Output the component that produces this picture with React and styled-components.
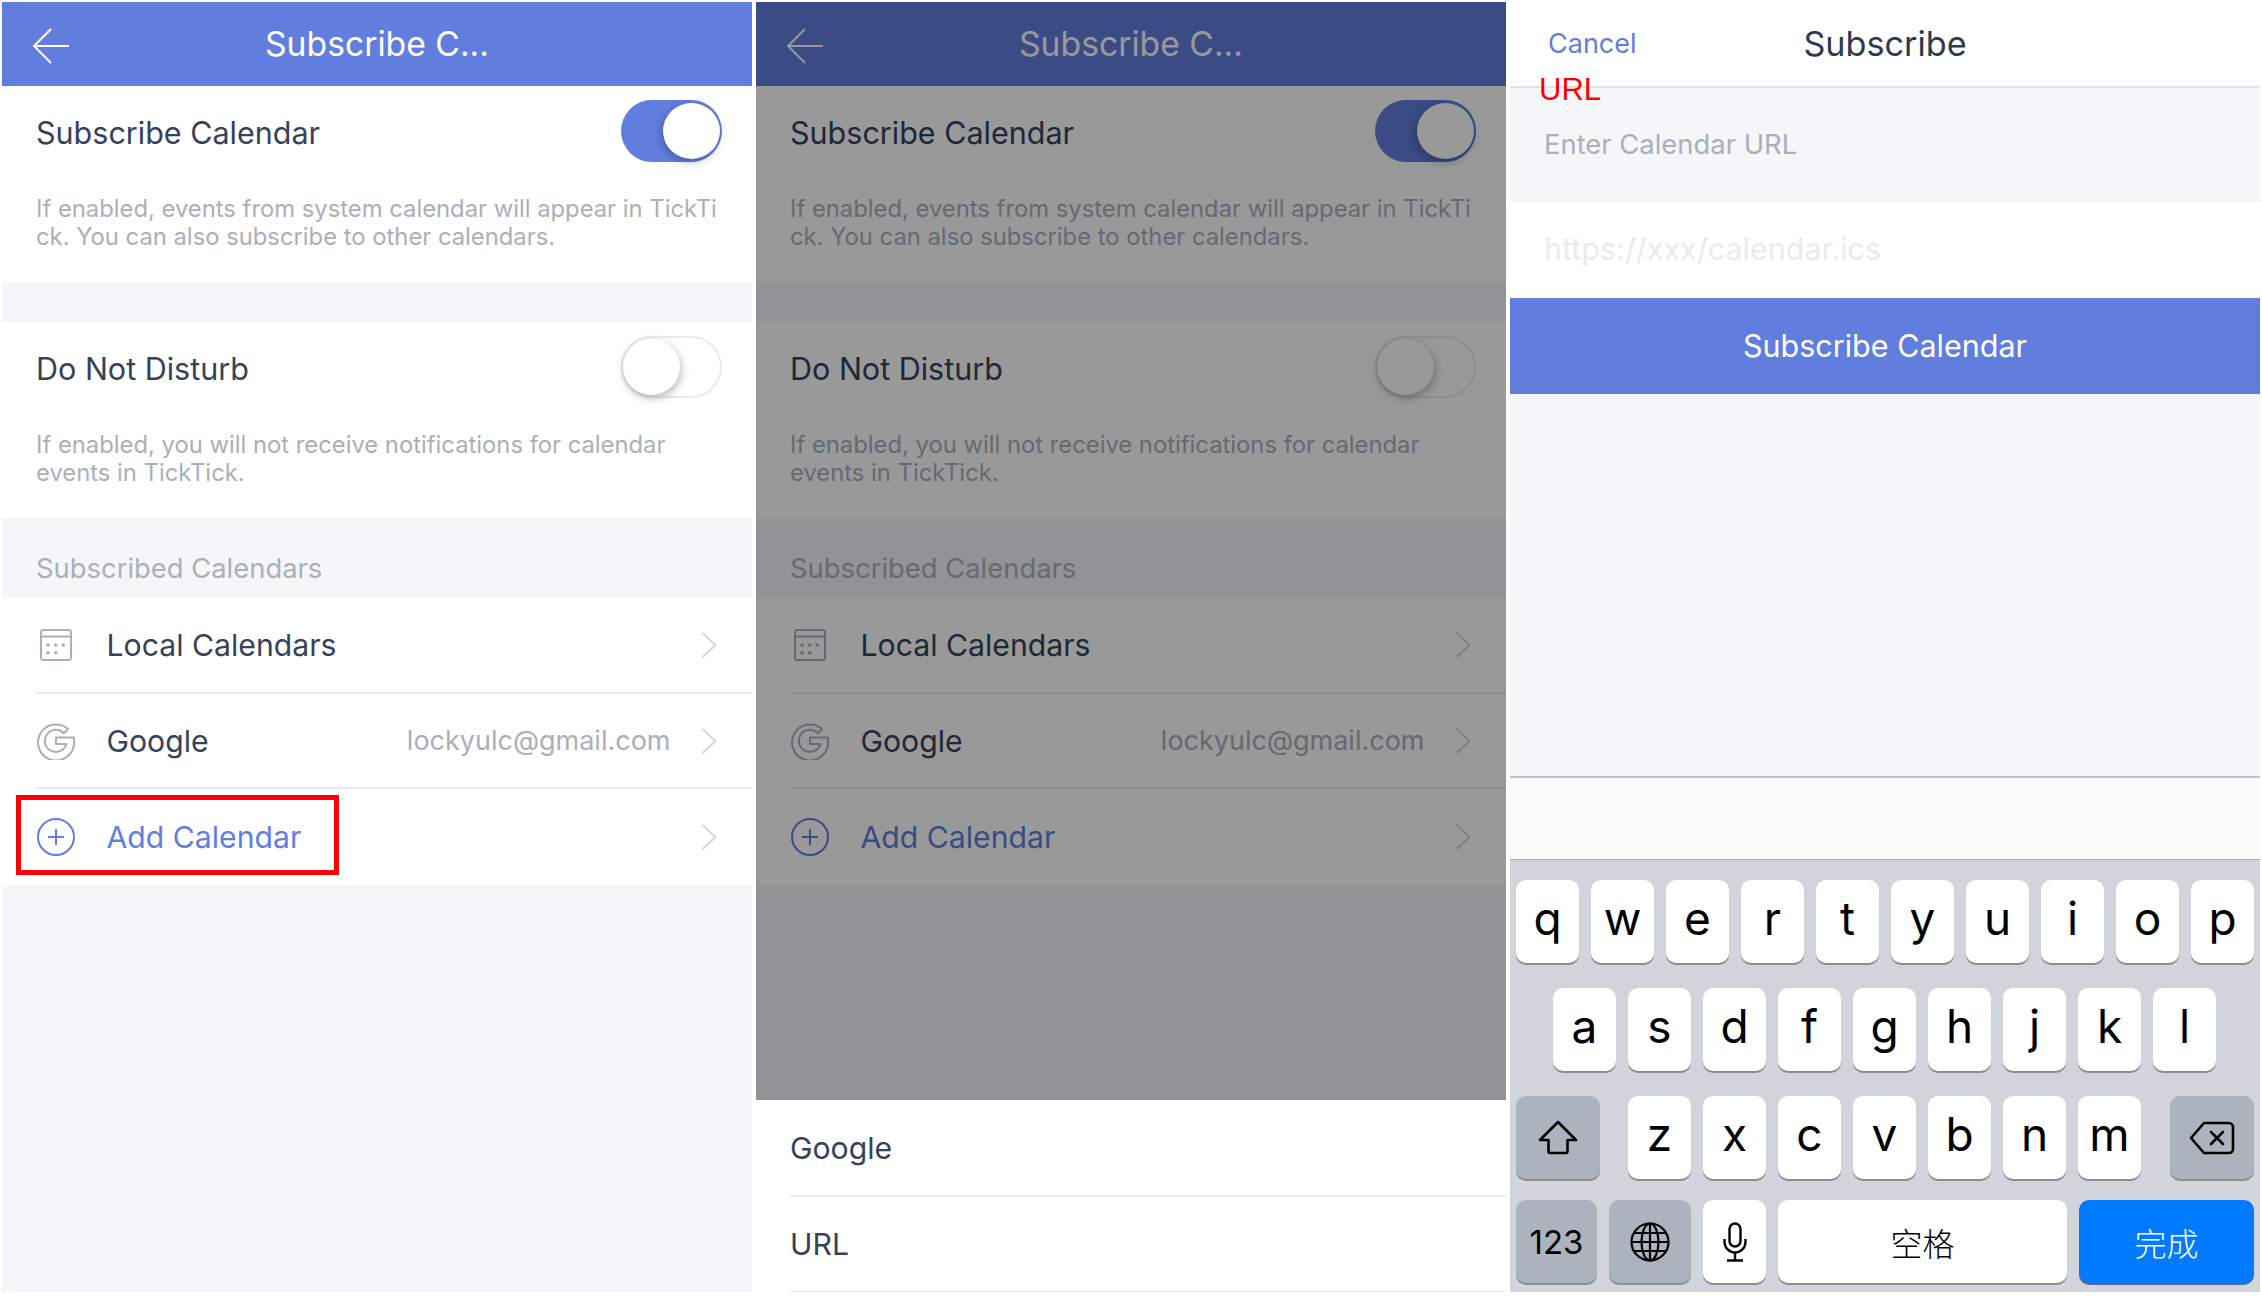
import React from "react";
import styled, { createGlobalStyle } from "styled-components";

const BLUE = "#617ede";
const INK = "#36425a";
const MUTED = "#a9b0bc";
const PAGE = "#f4f6f8";
const LINE = "#e9ebee";

const Global = createGlobalStyle`
  html, body { margin: 0; padding: 0; background: #fff; }
  body { font-family: Inter, "Noto Sans CJK SC", sans-serif; width: 2262px; height: 1296px; overflow: hidden; }
`;
const Page = styled.div`
  display: grid;
  grid-template-columns: 750px 750px 750px;
  column-gap: 4px;
  padding: 2px 0 0 2px;
  height: 1290px;
`;
const Panel = styled.section`
  position: relative;
  display: flex;
  flex-direction: column;
  height: 1290px;
  background: ${PAGE};
  overflow: hidden;
`;
const Header = styled.header`
  position: relative;
  display: flex;
  align-items: center;
  justify-content: center;
  height: 84px;
  box-sizing: border-box;
  padding-bottom: 2px;
  background: ${BLUE};
  color: #fff;
  font-size: 33.7px;
  flex: none;
`;
const BackIcon = styled.svg`
  position: absolute;
  left: 30px;
  top: 26px;
`;
const Card = styled.div`
  background: #fff;
  height: ${(p) => p.$h}px;
  padding: 0 30px 0 34px;
  margin-bottom: ${(p) => p.$mb || 0}px;
  flex: none;
`;
const CardHead = styled.div`
  display: flex;
  align-items: center;
  justify-content: space-between;
  height: 92px;
  font-size: 30.5px;
  color: ${INK};
`;
const Note = styled.p`
  margin: 17px 0 0;
  font-size: 23.8px;
  line-height: 28px;
  color: ${MUTED};
  white-space: nowrap;
`;
const Track = styled.div`
  position: relative;
  width: 101px;
  height: 62px;
  box-sizing: border-box;
  border-radius: 31px;
  margin-top: -2px;
  background: ${(p) => (p.$on ? BLUE : "#fff")};
  border: ${(p) => (p.$on ? "none" : "2px solid #e9ebef")};
`;
const Knob = styled.div`
  position: absolute;
  top: ${(p) => (p.$on ? 3 : 1)}px;
  ${(p) => (p.$on ? "right: 2px;" : "left: 0;")}
  width: 57px;
  height: 56px;
  border-radius: 50%;
  background: #fff;
  box-shadow: ${(p) => (p.$on ? "-2px 3px 8px rgba(30,40,80,.35)" : "1px 3px 9px rgba(60,70,90,.4)")};
`;
const Caption = styled.div`
  height: 80px;
  padding: 0 0 13px 34px;
  box-sizing: border-box;
  display: flex;
  align-items: flex-end;
  font-size: 27.4px;
  line-height: 34px;
  color: ${MUTED};
  flex: none;
`;
const List = styled.div`
  background: #fff;
  flex: none;
  padding-left: 34px;
`;
const Row = styled.div`
  position: relative;
  display: flex;
  align-items: center;
  height: ${(p) => p.$h || 95.7}px;
  box-sizing: border-box;
  padding-right: 35.5px;
  border-bottom: ${(p) => (p.$last ? "none" : `2px solid ${LINE}`)};
  font-size: 30.2px;
  color: ${(p) => (p.$accent ? BLUE : INK)};
`;
const IconSlot = styled.span`
  display: flex;
  width: 40px;
  justify-content: center;
  margin-right: 30.5px;
`;
const RowValue = styled.span`
  margin-left: auto;
  margin-right: 30px;
  font-size: 27px;
  color: ${MUTED};
`;
const Chevron = styled.svg`
  margin-left: ${(p) => (p.$auto ? "auto" : "0")};
`;
const Marker = styled.div`
  position: absolute;
  left: -20px;
  top: 6px;
  width: 323px;
  height: 80px;
  box-sizing: border-box;
  border: 5px solid #fb0007;
`;
const Scrim = styled.div`
  position: absolute;
  left: 0;
  right: 0;
  top: 0;
  height: 1098px;
  background: rgba(0, 0, 0, 0.4);
`;
const Sheet = styled.div`
  position: absolute;
  left: 0;
  right: 0;
  top: 1098px;
  bottom: 0;
  padding-left: 34px;
  background: #fff;
`;
const TopBar = styled.div`
  position: relative;
  height: 84px;
  box-sizing: content-box;
  background: #fff;
  border-bottom: 2px solid #e1e3e7;
  display: flex;
  align-items: center;
  justify-content: center;
  color: #2f394d;
  font-size: 34.2px;
  flex: none;
`;
const TitleText = styled.span`
  margin-bottom: 2px;
`;
const Cancel = styled.span`
  position: absolute;
  left: 38px;
  top: 25px;
  font-size: 27px;
  color: ${BLUE};
`;
const Stamp = styled.span`
  position: absolute;
  left: 29px;
  top: 69px;
  font-family: "Liberation Sans", sans-serif;
  font-size: 31px;
  line-height: 38px;
  color: #fb0007;
`;
const FormLabel = styled.div`
  height: 114px;
  box-sizing: border-box;
  padding: 37px 0 0 34px;
  font-size: 27.4px;
  line-height: 38px;
  color: ${MUTED};
  flex: none;
`;
const UrlField = styled.div`
  height: 96px;
  box-sizing: border-box;
  display: flex;
  align-items: center;
  padding: 0 0 3px 34px;
  font-size: 30.5px;
  background: #fff;
  color: #e9ebee;
  flex: none;
`;
const Submit = styled.div`
  height: 96px;
  box-sizing: border-box;
  padding-bottom: 2px;
  display: flex;
  align-items: center;
  justify-content: center;
  background: ${BLUE};
  color: #fff;
  font-size: 30.5px;
  flex: none;
`;
const Filler = styled.div`
  flex: 1;
  background: ${PAGE};
  border-bottom: 2px solid #bdc1cc;
`;
const Gap = styled.div`
  height: 81px;
  background: #fbfbfc;
  flex: none;
`;
const Keyboard = styled.div`
  height: 433px;
  box-sizing: border-box;
  background: #d1d5db;
  border-top: 1px solid #a9adb5;
  padding: 20px 6px 0;
  flex: none;
`;
const KeyRow = styled.div`
  display: flex;
  height: 84px;
  margin-top: ${(p) => p.$mt || 0}px;
  padding-left: ${(p) => p.$pl || 0}px;
`;
const Key = styled.div`
  display: flex;
  align-items: center;
  justify-content: center;
  flex: none;
  width: ${(p) => p.$w || 63}px;
  margin-left: ${(p) => p.$ml || 0}px;
  margin-right: ${(p) => p.$mr ?? 12}px;
  height: 83px;
  border-radius: 10px;
  background: ${(p) => (p.$tone === "dark" ? "#acb3be" : p.$tone === "go" ? "#007aff" : "#fff")};
  box-shadow: 0 2px 0 ${(p) => (p.$tone === "go" ? "#5d6b80" : "#8a8c91")};
  color: ${(p) => (p.$tone === "go" ? "#fff" : "#000")};
  font-family: ${(p) => (p.$cjk ? '"Noto Sans CJK SC", sans-serif' : 'Inter, "Liberation Sans", sans-serif')};
  font-size: ${(p) => p.$size || 46}px;
  font-weight: ${(p) => (p.$cjk ? 300 : 400)};
  padding-bottom: ${(p) => p.$pb || 0}px;
  box-sizing: border-box;
`;

const ChevronIcon = (props) => (
  <Chevron {...props} width="16" height="26" viewBox="0 0 16 26" fill="none" stroke="#d3d7dc" strokeWidth="2">
    <path d="M1.5 1l13 12-13 12" />
  </Chevron>
);
const CalendarIcon = () => (
  <svg width="32" height="32" viewBox="0 0 32 32" fill="none" stroke={MUTED} strokeWidth="2">
    <rect x="1" y="1" width="30" height="30" rx="2.5" />
    <path d="M1 7.5h30" />
    <g fill={MUTED} stroke="none">
      <circle cx="8" cy="16" r="1.8" /><circle cx="15.7" cy="16" r="1.8" /><circle cx="23.3" cy="16" r="1.8" />
      <circle cx="8" cy="23.7" r="1.8" /><circle cx="15.7" cy="23.7" r="1.8" />
    </g>
  </svg>
);
const GoogleIcon = () => (
  <svg width="38" height="38" viewBox="0 0 38 38" fill="none" stroke={MUTED} strokeWidth="2" strokeLinejoin="round">
    <path d="M31 7A18 18 0 1 0 37 19L37 15.5L19 15.5L19 22L29.4 22A11 11 0 1 1 26.8 11.2Z" />
  </svg>
);
const PlusIcon = () => (
  <svg width="38" height="38" viewBox="0 0 38 38" fill="none" stroke={BLUE} strokeWidth="2">
    <circle cx="19" cy="19" r="18" />
    <path d="M19 11v16M11 19h16" />
  </svg>
);

const MarkCtx = React.createContext(false);
function AnnotationSlot() {
  return React.useContext(MarkCtx) ? <Marker /> : null;
}

const Settings = () => (
  <>
    <Header>
      Subscribe C...
      <BackIcon width="38" height="36" viewBox="0 0 38 36" fill="none" stroke="#fff" strokeWidth="2">
        <path d="M19 1L2 18l17 17M2 18h35" />
      </BackIcon>
    </Header>
    <Card $h={196} $mb={40}>
      <CardHead>
        Subscribe Calendar
        <Track $on><Knob $on /></Track>
      </CardHead>
      <Note>
        If enabled, events from system calendar will appear in TickTi<br />
        ck. You can also subscribe to other calendars.
      </Note>
    </Card>
    <Card $h={196}>
      <CardHead>
        Do Not Disturb
        <Track><Knob /></Track>
      </CardHead>
      <Note>
        If enabled, you will not receive notifications for calendar<br />
        events in TickTick.
      </Note>
    </Card>
    <Caption>Subscribed Calendars</Caption>
    <List>
      <Row>
        <IconSlot><CalendarIcon /></IconSlot>
        Local Calendars
        <ChevronIcon $auto />
      </Row>
      <Row>
        <IconSlot><GoogleIcon /></IconSlot>
        Google
        <RowValue>lockyulc@gmail.com</RowValue>
        <ChevronIcon />
      </Row>
      <Row $last $accent>
        <IconSlot><PlusIcon /></IconSlot>
        Add Calendar
        <ChevronIcon $auto />
        <AnnotationSlot />
      </Row>
    </List>
  </>
);

const ShiftIcon = () => (
  <svg width="40" height="35" viewBox="0 0 40 35" fill="none" stroke="#000" strokeWidth="2.6" strokeLinejoin="round">
    <path d="M20 2L38 20H29.5V31.5a1.5 1.5 0 0 1-1.5 1.5H12a1.5 1.5 0 0 1-1.5-1.5V20H2Z" />
  </svg>
);
const DeleteIcon = () => (
  <svg width="46" height="34" viewBox="0 0 46 34" fill="none" stroke="#000" strokeWidth="2.6" strokeLinejoin="round">
    <path d="M15 2H40a4 4 0 0 1 4 4V28a4 4 0 0 1-4 4H15L2 17Z" />
    <path d="M22 11l12 12M34 11l-12 12" strokeLinecap="round" />
  </svg>
);
const GlobeIcon = () => (
  <svg width="40" height="40" viewBox="0 0 40 40" fill="none" stroke="#000" strokeWidth="2.2">
    <circle cx="20" cy="20" r="18.5" />
    <ellipse cx="20" cy="20" rx="8.5" ry="18.5" />
    <path d="M20 1.5v37M1.5 20h37M4 11h32M4 29h32" />
  </svg>
);
const MicIcon = () => (
  <svg width="24" height="40" viewBox="0 0 24 40" fill="none" stroke="#000" strokeWidth="2.4">
    <rect x="6.5" y="1.5" width="11" height="23" rx="5.5" />
    <path d="M1.5 17v3a10.5 10.5 0 0 0 21 0v-3M12 30.5V38M4 38.5h16" />
  </svg>
);

const Letters = ({ keys }) =>
  keys.split("").map((k) => <Key key={k} $pb={8}>{k}</Key>);

export default function App() {
  return (
    <>
      <Global />
      <Page>
        <Panel>
          <MarkCtx.Provider value={true}><Settings /></MarkCtx.Provider>
        </Panel>
        <Panel>
          <Settings />
          <Scrim />
          <Sheet>
            <Row $h={97}>Google</Row>
            <Row $h={96}>URL</Row>
          </Sheet>
        </Panel>
        <Panel>
          <TopBar>
            <Cancel>Cancel</Cancel>
            <TitleText>Subscribe</TitleText>
          </TopBar>
          <Stamp>URL</Stamp>
          <FormLabel>Enter Calendar URL</FormLabel>
          <UrlField>https://xxx/calendar.ics</UrlField>
          <Submit>Subscribe Calendar</Submit>
          <Filler />
          <Gap />
          <Keyboard>
            <KeyRow><Letters keys="qwertyuiop" /></KeyRow>
            <KeyRow $mt={24} $pl={37}><Letters keys="asdfghjkl" /></KeyRow>
            <KeyRow $mt={24}>
              <Key $w={84} $mr={28} $tone="dark"><ShiftIcon /></Key>
              <Letters keys="zxcvbnm" />
              <Key $w={84} $ml={17} $mr={0} $tone="dark"><DeleteIcon /></Key>
            </KeyRow>
            <KeyRow $mt={20}>
              <Key $w={81} $tone="dark" $size={33}>123</Key>
              <Key $w={82} $tone="dark"><GlobeIcon /></Key>
              <Key $w={63}><MicIcon /></Key>
              <Key $w={289} $size={32} $cjk>空格</Key>
              <Key $w={175} $mr={0} $size={32} $cjk $tone="go">完成</Key>
            </KeyRow>
          </Keyboard>
        </Panel>
      </Page>
    </>
  );
}
